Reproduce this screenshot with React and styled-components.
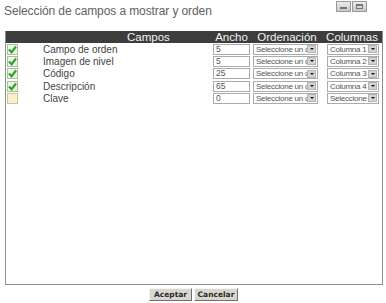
import React from 'react';
import styled, { createGlobalStyle } from 'styled-components';

const GlobalStyle = createGlobalStyle`
  html, body {
    margin: 0;
    padding: 0;
    background: #ffffff;
  }
  body {
    font-family: "Liberation Sans", Arial, sans-serif;
  }
`;

const Page = styled.div`
  width: 386px;
  height: 303px;
  display: flex;
  flex-direction: column;
  overflow: hidden;
`;

const TitleBar = styled.div`
  height: 31px;
  display: flex;
  justify-content: space-between;
  align-items: flex-start;
  padding: 0 19px 0 4px;
`;

const Title = styled.div`
  margin-top: 4px;
  font-size: 12px;
  color: #626262;
  letter-spacing: -0.1px;
`;

const WinButtons = styled.div`
  display: flex;
  gap: 1px;
  margin-top: 1px;
`;

const WinButton = styled.div`
  width: 15px;
  height: 11px;
  box-sizing: border-box;
  border: 1px solid #9a9a9a;
  background: linear-gradient(#ececec, #c8c8c8);
  display: flex;
  align-items: center;
  justify-content: center;
`;

const MinGlyph = styled.div`
  width: 7px;
  height: 2px;
  margin-top: 3px;
  background: #777;
`;

const MaxGlyph = styled.div`
  width: 7px;
  height: 5px;
  box-sizing: border-box;
  border: 1px solid #777;
  border-top-width: 2px;
`;

const Panel = styled.div`
  margin-left: 5px;
  width: 378px;
  height: 254px;
  box-sizing: border-box;
  border: 1px solid #8e8e8e;
  border-top: none;
`;

const Grid = styled.div`
  display: grid;
  grid-template-columns: 32px 173px 41px 70px 1fr;
  grid-template-rows: 12px repeat(5, 12.3px);
  align-items: center;
`;

const HeadCell = styled.div`
  background: #3d3d3d;
  color: #f2f2f2;
  font-size: 11.5px;
  line-height: 12px;
  height: 12px;
  text-align: ${(p) => p.$align || 'center'};
  padding-left: ${(p) => p.$pl || 0}px;
  white-space: nowrap;
`;

const CheckCell = styled.div`
  display: flex;
  align-items: center;
  padding-left: 1px;
`;

const Box = styled.div`
  width: 11px;
  height: 11px;
  box-sizing: border-box;
  border: 1px solid ${(p) => (p.$on ? '#a7bfa2' : '#cfc493')};
  background: ${(p) => (p.$on ? '#eef3e6' : '#f8f1cc')};
  display: flex;
  align-items: center;
  justify-content: center;
`;

const Name = styled.div`
  font-size: 10px;
  color: #444;
  padding-left: 5px;
  white-space: nowrap;
`;

const InputCell = styled.div`
  display: flex;
  align-items: center;
  padding-left: ${(p) => p.$pl || 0}px;
`;

const TextInput = styled.div`
  width: 37px;
  height: 11px;
  box-sizing: border-box;
  border: 1px solid #ababab;
  background: #fff;
  font-size: 8.5px;
  line-height: 9px;
  color: #555;
  padding-left: 2px;
`;

const Select = styled.div`
  width: ${(p) => p.$w}px;
  height: 11px;
  box-sizing: border-box;
  border: 1px solid #ababab;
  background: #fff;
  display: flex;
  align-items: center;
  overflow: hidden;
`;

const SelectText = styled.div`
  flex: 1;
  min-width: 0;
  font-size: 8px;
  line-height: 9px;
  color: #555;
  padding-left: 2px;
  white-space: nowrap;
  overflow: hidden;
  letter-spacing: -0.25px;
`;

const Arrow = styled.div`
  width: 9px;
  height: 8px;
  margin-right: 1px;
  box-sizing: border-box;
  flex: none;
  background: #d2d2d2;
  border: 1px solid #b4b4b4;
  display: flex;
  align-items: center;
  justify-content: center;
  &::after {
    content: '';
    border-left: 2px solid transparent;
    border-right: 2px solid transparent;
    border-top: 2px solid #111;
  }
`;

const Footer = styled.div`
  display: flex;
  justify-content: center;
  gap: 2px;
  padding: 3px 0 0 1px;
`;

const Button = styled.button`
  width: ${(p) => p.$w}px;
  height: 13px;
  padding: 0;
  box-sizing: border-box;
  background: #d9d6cf;
  border: 1px solid;
  border-color: #f4f4f4 #6f6f6f #6f6f6f #f4f4f4;
  font-family: "DejaVu Sans", Verdana, sans-serif;
  font-size: 7.5px;
  font-weight: bold;
  color: #2a2a2a;
  line-height: 10px;
`;

const Check = () => (
  <svg width="9" height="9" viewBox="0 0 9 9">
    <path d="M1 4.5 L3.6 7.2 L8 1.5" fill="none" stroke="#2ea529" strokeWidth="2.2" />
  </svg>
);

const rows = [
  { name: 'Campo de orden', on: true, ancho: '5', col: 'Columna 1' },
  { name: 'Imagen de nivel', on: true, ancho: '5', col: 'Columna 2' },
  { name: 'Código', on: true, ancho: '25', col: 'Columna 3' },
  { name: 'Descripción', on: true, ancho: '65', col: 'Columna 4' },
  { name: 'Clave', on: false, ancho: '0', col: 'Seleccione' },
];

export default function App() {
  return (
    <Page>
      <GlobalStyle />
      <TitleBar>
        <Title>Selección de campos a mostrar y orden</Title>
        <WinButtons>
          <WinButton><MinGlyph /></WinButton>
          <WinButton><MaxGlyph /></WinButton>
        </WinButtons>
      </TitleBar>
      <Panel>
        <Grid>
          <HeadCell />
          <HeadCell $align="left" $pl={89}>Campos</HeadCell>
          <HeadCell>Ancho</HeadCell>
          <HeadCell>Ordenación</HeadCell>
          <HeadCell>Columnas</HeadCell>
          {rows.map((r) => (
            <React.Fragment key={r.name}>
              <CheckCell>
                <Box $on={r.on}>{r.on && <Check />}</Box>
              </CheckCell>
              <Name>{r.name}</Name>
              <InputCell $pl={2}>
                <TextInput>{r.ancho}</TextInput>
              </InputCell>
              <InputCell $pl={1}>
                <Select $w={65}>
                  <SelectText>Seleccione un campo</SelectText>
                  <Arrow />
                </Select>
              </InputCell>
              <InputCell $pl={5}>
                <Select $w={52}>
                  <SelectText>{r.col}</SelectText>
                  <Arrow />
                </Select>
              </InputCell>
            </React.Fragment>
          ))}
        </Grid>
      </Panel>
      <Footer>
        <Button $w={43}>Aceptar</Button>
        <Button $w={44}>Cancelar</Button>
      </Footer>
    </Page>
  );
}
